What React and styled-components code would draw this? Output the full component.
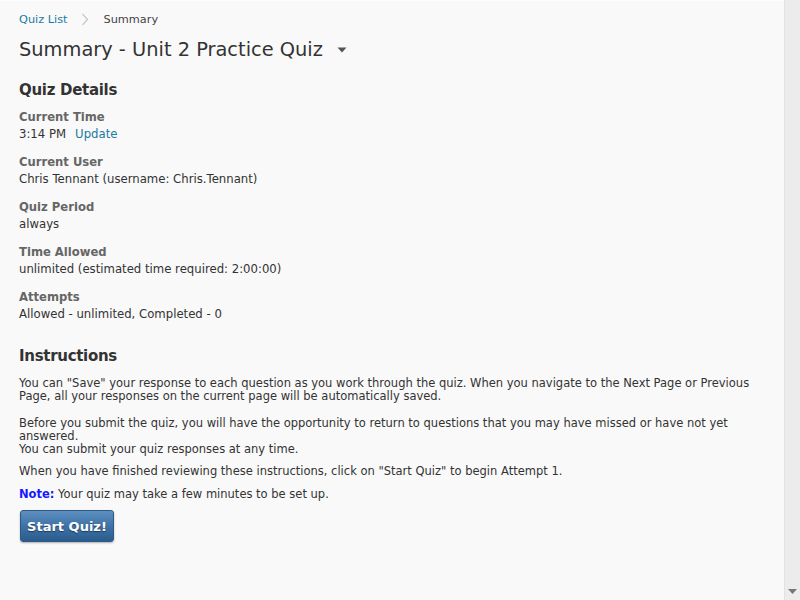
import styled, { createGlobalStyle } from 'styled-components';

const GlobalStyle = createGlobalStyle`
  html, body {
    margin: 0;
    padding: 0;
    height: 100%;
    background: #f9f9f9;
  }
  #root {
    height: 100%;
  }
`;

const Frame = styled.div`
  display: flex;
  width: 800px;
  height: 600px;
  overflow: hidden;
  font-family: "DejaVu Sans", Verdana, sans-serif;
  color: #333;
`;

const Page = styled.main`
  flex: 1;
  padding: 10px 0 0 19px;
  background: #f9f9f9;
  border-top: 1px solid #fdfdfd;
`;

const ScrollTrack = styled.div`
  position: relative;
  width: 15px;
  background: #ececec;
  border-left: 1px solid #e2e2e2;
`;

const ScrollArrow = styled.svg`
  position: absolute;
  left: 3px;
  bottom: 5px;
`;

const Crumbs = styled.nav`
  display: flex;
  align-items: center;
  gap: 14px;
  font-size: 11.3px;
  height: 16px;
`;

const Link = styled.a`
  color: #1a7aa3;
  text-decoration: none;
  cursor: pointer;
`;

const Current = styled.span`
  color: #444;
`;

const TitleRow = styled.div`
  display: flex;
  align-items: center;
  gap: 14px;
  margin-top: 10px;
`;

const Title = styled.h1`
  margin: 0;
  font-size: 19.4px;
  font-weight: normal;
  color: #333;
  line-height: 26px;
`;

const SectionTitle = styled.h2`
  margin: ${p => p.$top}px 0 0;
  font-size: 15px;
  letter-spacing: -0.3px;
  font-weight: bold;
  color: #333;
  line-height: 22px;
`;

const Field = styled.div`
  margin-top: ${p => (p.$first ? 8 : 11)}px;
`;

const Label = styled.div`
  font-size: 11.6px;
  font-weight: bold;
  color: #666;
  line-height: 17px;
`;

const Value = styled.div`
  display: flex;
  gap: 9px;
  font-size: 11.7px;
  line-height: 17px;
  color: #333;
`;

const Text = styled.p`
  margin: ${p => p.$top ?? 10}px 0 0;
  width: 750px;
  font-size: 11.5px;
  line-height: 13px;
  color: #333;
`;

const Note = styled.strong`
  color: #1717ff;
`;

const StartButton = styled.button`
  margin-top: 9px;
  margin-left: 1px;
  width: 94px;
  height: 32px;
  padding: 0;
  font-family: "DejaVu Sans", Verdana, sans-serif;
  font-size: 13px;
  font-weight: bold;
  color: #fff;
  text-shadow: 0 1px 1px rgba(0, 0, 0, 0.45);
  background: linear-gradient(to bottom, #5d8fc0 0%, #3c6fa3 55%, #2b5c8e 100%);
  border: 1px solid #2c5987;
  border-radius: 3px;
  box-shadow: 0 1px 2px rgba(0, 0, 0, 0.3);
  cursor: pointer;
`;

const fields = [
  { label: 'Current Time', value: '3:14 PM', link: 'Update' },
  { label: 'Current User', value: 'Chris Tennant (username: Chris.Tennant)' },
  { label: 'Quiz Period', value: 'always' },
  { label: 'Time Allowed', value: 'unlimited (estimated time required: 2:00:00)' },
  { label: 'Attempts', value: 'Allowed - unlimited, Completed - 0' },
];

export default function App() {
  return (
    <>
      <GlobalStyle />
      <Frame>
        <Page>
          <Crumbs>
            <Link>Quiz List</Link>
            <svg width="8" height="13" viewBox="0 0 8 13">
              <path d="M1.5 1 L6.5 6.5 L1.5 12" fill="none" stroke="#c8c8c8" strokeWidth="1.3" />
            </svg>
            <Current>Summary</Current>
          </Crumbs>
          <TitleRow>
            <Title>Summary - Unit 2 Practice Quiz</Title>
            <svg width="10" height="6" viewBox="0 0 10 6">
              <path d="M0.5 0.5 L9.5 0.5 L5 5.5 Z" fill="#555" />
            </svg>
          </TitleRow>

          <SectionTitle $top={16}>Quiz Details</SectionTitle>
          {fields.map((f, i) => (
            <Field key={f.label} $first={i === 0}>
              <Label>{f.label}</Label>
              <Value>
                <span>{f.value}</span>
                {f.link && <Link>{f.link}</Link>}
              </Value>
            </Field>
          ))}

          <SectionTitle $top={22}>Instructions</SectionTitle>
          <Text $top={10}>
            You can "Save" your response to each question as you work through the quiz. When you navigate to the Next Page or Previous Page, all your responses on the current page will be automatically saved.
          </Text>
          <Text $top={14}>
            Before you submit the quiz, you will have the opportunity to return to questions that you may have missed or have not yet answered.
            <br />
            You can submit your quiz responses at any time.
          </Text>
          <Text $top={9}>When you have finished reviewing these instructions, click on "Start Quiz" to begin Attempt 1.</Text>
          <Text>
            <Note>Note:</Note> Your quiz may take a few minutes to be set up.
          </Text>
          <StartButton>Start Quiz!</StartButton>
        </Page>
        <ScrollTrack>
          <ScrollArrow width="9" height="6" viewBox="0 0 9 6">
            <path d="M0 0 L9 0 L4.5 5 Z" fill="#777" />
          </ScrollArrow>
        </ScrollTrack>
      </Frame>
    </>
  );
}
